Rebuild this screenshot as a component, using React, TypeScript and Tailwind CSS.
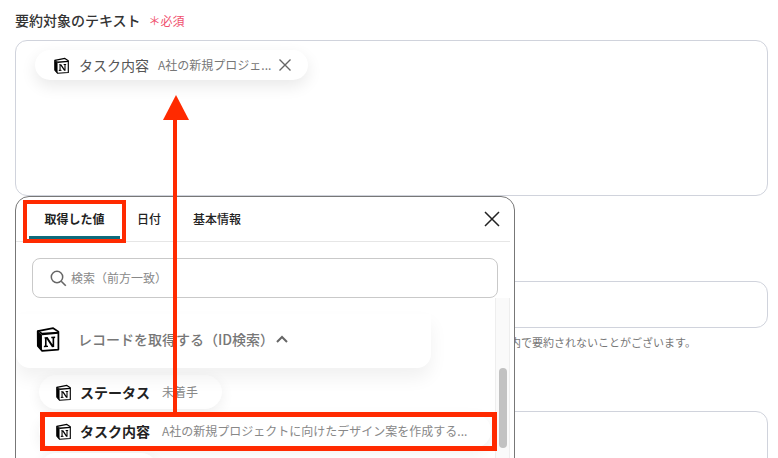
const font = { fontFamily: '"Noto Sans CJK JP", "Noto Sans", sans-serif' };

function NotionIcon({ size }: { size: number }) {
  return (
    <svg width={size} height={size} viewBox="0 0 24 24" className="shrink-0">
      <path d="M2.5 4.8 16.8 2 21.6 5.2V21.8L6.6 23 2.6 18.4Z" fill="#fff" stroke="#000" strokeWidth="1.6" strokeLinejoin="round" />
      <path d="M2.5 4.6 6.6 8.6 21.6 7.2V5.2L6.6 6.3 2.8 3.8Z" fill="#000" />
      <path d="M2.5 4.8V18.4L6.4 22.8V8.2Z" fill="#000" />
      <path d="M9.2 10.4 11.6 10.2 16.2 17V11.4L15 11.2V10l3.6-.2v1.2l-.9.3V19.4l-2 .1-5-7.6v6l1.3.3V19.4l-3.8.2v-1.2l1-.3V11.4l-1-.1Z" fill="#000" />
    </svg>
  );
}

function Pill({ title, value }: { title: string; value: string }) {
  return (
    <div className="flex h-[34px] items-center rounded-full bg-white pl-4 pr-6 shadow-[0_4px_14px_rgba(0,0,0,0.07)] w-fit">
      <NotionIcon size={17} />
      <span className="ml-2 text-[14px] font-bold text-[#222]">{title}</span>
      <span className="ml-3 text-[12px] text-[#888]">{value}</span>
    </div>
  );
}

export default function App() {
  return (
    <div className="relative h-[458px] w-[778px] overflow-hidden bg-white" style={font}>
      <div className="flex flex-col px-[15px] pt-[11px] w-[767px] box-content">
        <div className="flex h-[19px] items-center">
          <span className="text-[14px] font-medium leading-[19px] text-[#333]">要約対象のテキスト</span>
          <span className="ml-2 text-[12px] text-[#f0506e]">＊必須</span>
        </div>
        <div className="mt-[10px] h-[156px] w-[753px] rounded-[12px] border border-[#d0d3dc] bg-white pl-[19px] pt-[9px]">
          <div className="flex h-[30px] w-[273px] items-center rounded-full bg-white pl-[18px] shadow-[0_6px_16px_rgba(0,0,0,0.09)]">
            <NotionIcon size={17} />
            <span className="ml-[9px] text-[14px] text-[#555]">タスク内容</span>
            <span className="ml-[9px] w-[116px] whitespace-nowrap text-[12px] text-[#777]">A社の新規プロジェ...</span>
            <svg width="16" height="16" viewBox="0 0 16 16" className="ml-[3px]">
              <path d="M2.5 2.5 13.5 13.5M13.5 2.5 2.5 13.5" stroke="#666" strokeWidth="1.4" fill="none" />
            </svg>
          </div>
        </div>
        <div className="mt-[85px] h-[47px] w-[753px] rounded-[12px] border border-[#d0d3dc]" />
        <div className="mt-[6px] h-[16px] w-[753px] text-right text-[11px] leading-[16px] text-[#777] pr-[72px]">
          内で要約されないことがございます。
        </div>
        <div className="mt-[61px] h-[80px] w-[753px] rounded-[12px] border border-[#d0d3dc]" />
      </div>

      {/* popup */}
      <div className="absolute left-[15px] top-[196px] flex h-[280px] w-[500px] flex-col overflow-hidden rounded-t-[14px] border border-[#777] bg-white">
        <div className="mx-0 flex h-[45px] w-[494px] shrink-0 items-center justify-between border-b border-[#e6e6e6]">
          <div className="flex h-full items-end pl-[13px]">
            <div className="flex h-full w-[91px] items-center justify-center border-b-[5px] border-[#0f6b7c] rounded-b-[2px] pt-[4px] text-[12px] font-bold text-[#222]">取得した値</div>
            <div className="flex h-full items-center pl-[17px] text-[12px] font-medium text-[#222]">日付</div>
            <div className="flex h-full items-center pl-[32px] text-[12px] font-medium text-[#222]">基本情報</div>
          </div>
          <svg width="16" height="16" viewBox="0 0 16 16" className="mr-[10px]">
            <path d="M1 1 15 15M15 1 1 15" stroke="#222" strokeWidth="1.5" fill="none" />
          </svg>
        </div>
        <div className="mx-[16px] mt-[16px] flex h-[40px] w-[466px] shrink-0 items-center rounded-[8px] border border-[#c9c9c9] pl-[17px]">
          <svg width="17" height="17" viewBox="0 0 17 17">
            <circle cx="7" cy="7" r="5.7" stroke="#666" strokeWidth="1.5" fill="none" />
            <path d="M11.2 11.2 15.8 15.8" stroke="#666" strokeWidth="1.6" />
          </svg>
          <span className="ml-[4px] text-[12px] text-[#888]">検索（前方一致）</span>
        </div>
        <div className="relative flex-1">
          <div className="relative mt-[16px] h-[54px] w-[415px] rounded-b-[14px] bg-white pl-[19px] pt-[12px] shadow-[0_10px_18px_rgba(0,0,0,0.06)]">
            <div className="flex items-center">
              <NotionIcon size={26} />
              <span className="ml-[17px] text-[14px] font-medium text-[#777]">レコードを取得する（ID検索）</span>
              <svg width="12" height="8" viewBox="0 0 12 8" className="ml-[2px]">
                <path d="M1 7 6 2 11 7" stroke="#666" strokeWidth="2" fill="none" />
              </svg>
            </div>
          </div>
          <div className="mt-[7px] flex flex-col gap-[5px] pl-[23px]">
            <Pill title="ステータス" value="未着手" />
            <Pill title="タスク内容" value="A社の新規プロジェクトに向けたデザイン案を作成する..." />
            <Pill title="担当者" value="" />
          </div>
          <div className="absolute right-[4px] top-0 flex h-full w-[15px] justify-center border-x border-[#eeeeee] bg-[#fafafa]">
            <div className="mt-[70px] h-[80px] w-[8px] rounded-full bg-[#c2c2c2]" />
          </div>
        </div>
      </div>

      {/* annotation */}
      <div className="absolute left-[23px] top-[200px] h-[43px] w-[103px] border-[4px] border-[#ff2a00]" />
      <div className="absolute left-[40px] top-[412px] h-[39px] w-[457px] border-[5px] border-[#ff2a00]" />
      <div className="absolute left-[173px] top-[118px] h-[296px] w-[4px] bg-[#ff2a00]" />
      <svg className="absolute left-[163px] top-[95px]" width="26" height="25" viewBox="0 0 26 25">
        <path d="M13 0 26 25H0Z" fill="#ff2a00" />
      </svg>
    </div>
  );
}
